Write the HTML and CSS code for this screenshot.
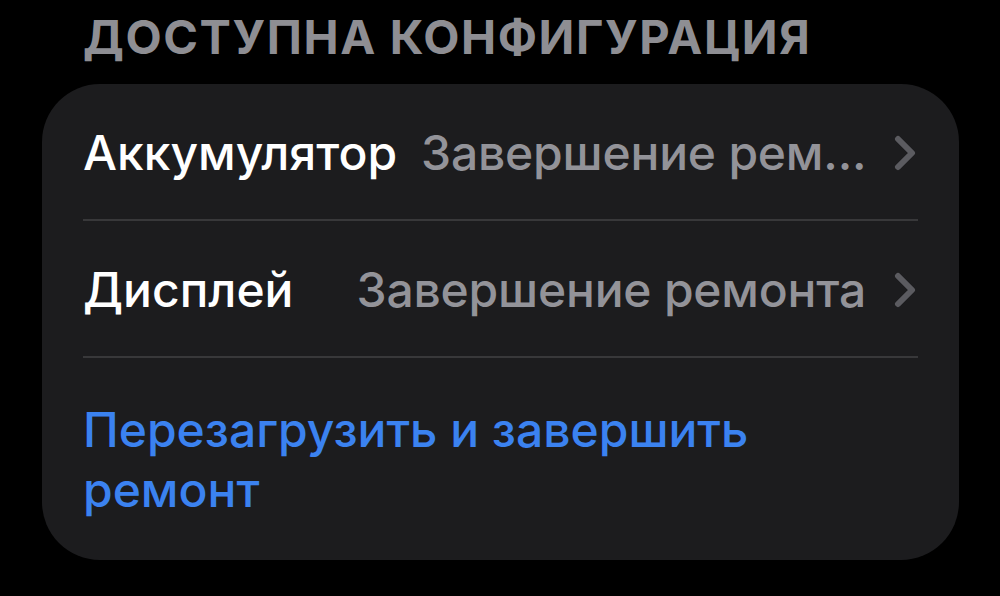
FILE: index.html
```html
<!DOCTYPE html>
<html lang="ru">
<head>
<meta charset="utf-8">
<link rel="stylesheet" href="styles.css">
</head>
<body>
<div class="page">
  <h2 class="section-title">ДОСТУПНА КОНФИГУРАЦИЯ</h2>
  <div class="card">
    <div class="row">
      <span class="label">Аккумулятор</span>
      <span class="value" title="Завершение ремонта">Завершение рем...</span>
      <svg class="chev" viewBox="0 0 22 36" width="22" height="36"><polyline points="4,4 18,18 4,32" fill="none" stroke="currentColor" stroke-width="6" stroke-linecap="round" stroke-linejoin="round"/></svg>
    </div>
    <div class="row">
      <span class="label">Дисплей</span>
      <span class="value">Завершение ремонта</span>
      <svg class="chev" viewBox="0 0 22 36" width="22" height="36"><polyline points="4,4 18,18 4,32" fill="none" stroke="currentColor" stroke-width="6" stroke-linecap="round" stroke-linejoin="round"/></svg>
    </div>
    <div class="action">Перезагрузить и завершить ремонт</div>
  </div>
</div>
</body>
</html>
```
FILE: styles.css
```css
html, body {
  margin: 0;
  padding: 0;
  background: #000;
}
body {
  font-family: Inter, "Noto Sans", sans-serif;
  -webkit-font-smoothing: antialiased;
}
.page {
  padding: 0 41px 0 42px;
}
.section-title {
  margin: 0;
  padding: 13px 0 0 41px;
  height: 84px;
  box-sizing: border-box;
  font-size: 47px;
  line-height: 48px;
  font-weight: 700;
  color: #8e8e93;
  letter-spacing: 1.6px;
}
.card {
  background: #1c1c1e;
  border-radius: 58px;
  padding: 0 41px;
  height: 476px;
  box-sizing: border-box;
}
.row {
  display: flex;
  align-items: center;
  height: 137px;
  padding-top: 2px;
  border-bottom: 2px solid #38383a;
  box-sizing: border-box;
}
.label {
  flex: none;
  font-size: 48px;
  font-weight: 500;
  color: #fff;
  margin-right: 24px;
}
.value {
  flex: 1;
  min-width: 0;
  text-align: right;
  font-size: 48px;
  font-weight: 500;
  color: #939399;
  white-space: nowrap;
  letter-spacing: -0.2px;
}
.chev {
  flex: none;
  margin-left: 28px;
  margin-right: 2px;
  color: #5b5b60;
}
.action {
  padding-top: 42px;
  font-size: 48px;
  line-height: 60px;
  font-weight: 500;
  color: #3b82f0;
  width: 700px;
}
```
